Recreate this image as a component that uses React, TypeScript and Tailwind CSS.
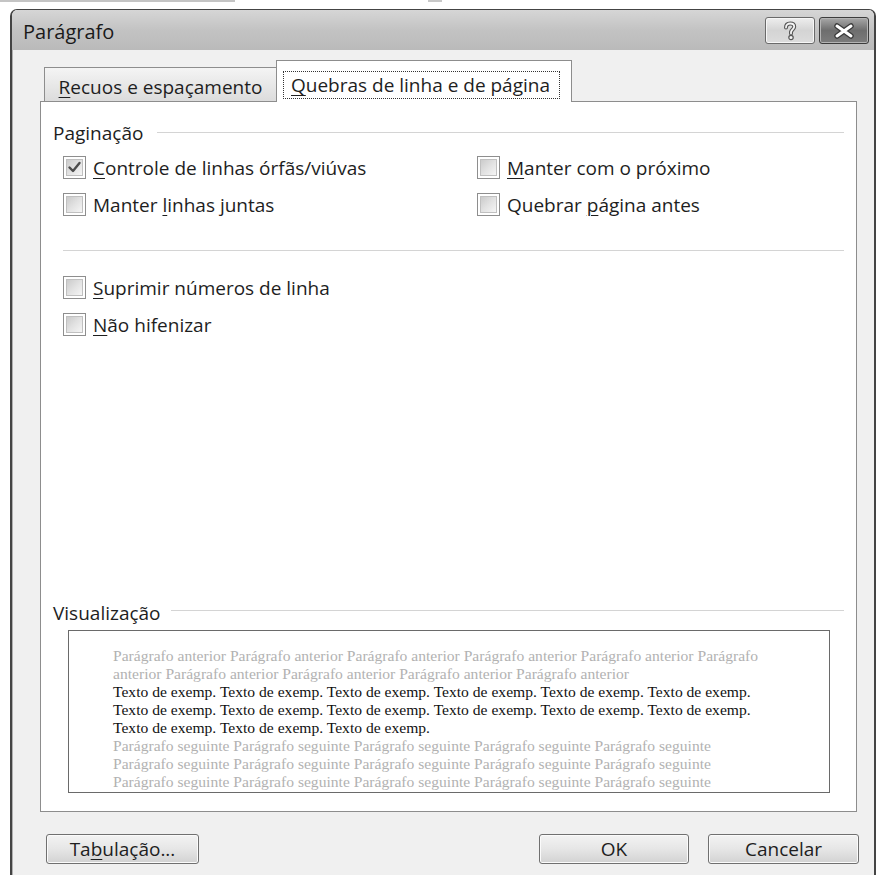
import React from 'react';

// Sublinha a letra de atalho (acelerador) de um rótulo
const Key: React.FC<{ children: React.ReactNode }> = ({ children }) => (
  <span className="underline underline-offset-[3px] decoration-[1px]">{children}</span>
);

const CheckMark = () => (
  <svg width="15" height="15" viewBox="0 0 15 15">
    <path d="M2.5 7.5 L6 11 L12.5 3" fill="none" stroke="#4d4d4d" strokeWidth="2.4" strokeLinecap="round" strokeLinejoin="round" />
  </svg>
);

const Check: React.FC<{ label: React.ReactNode; checked?: boolean }> = ({ label, checked }) => (
  <div className="flex items-center h-[37px] gap-[7px]">
    <span className="w-[23px] h-[23px] border border-[#8e8e8e] bg-white p-[2px] shrink-0">
      <span className="flex items-center justify-center w-full h-full border border-[#c0c0c0] bg-gradient-to-br from-[#cbcbcb] via-[#e2e2e2] to-[#f5f5f5]">
        {checked && <CheckMark />}
      </span>
    </span>
    <span className="text-[19px] leading-[26px] text-[#1e1e1e] whitespace-nowrap">{label}</span>
  </div>
);

const GroupHeader: React.FC<{ label: string; lineClass: string }> = ({ label, lineClass }) => (
  <div className="flex items-center h-[26px]">
    <span className="text-[19px] leading-[26px] text-[#1e1e1e]">{label}</span>
    <span className={`flex-1 h-px bg-[#d4d4d4] ${lineClass}`} />
  </div>
);

const DialogButton: React.FC<{ children: React.ReactNode; className?: string }> = ({ children, className }) => (
  <button
    className={`h-[30px] rounded-[3px] border border-[#707070] bg-gradient-to-b from-[#f3f3f3] via-[#e6e6e6] to-[#d2d2d2] shadow-[inset_0_0_0_1px_#fbfbfb] text-[19px] leading-[26px] text-[#1e1e1e] ${className ?? ''}`}
  >
    {children}
  </button>
);

const HelpIcon = () => (
  <svg width="16" height="20" viewBox="0 0 16 20">
    <path d="M4 6.5 C4 3.5 6 2.5 8.2 2.5 C10.8 2.5 12.2 4 12.2 5.8 C12.2 8 9.5 8.6 9 11 L9 12.5" fill="none" stroke="#555" strokeWidth="4" strokeLinecap="round" />
    <path d="M4 6.5 C4 3.5 6 2.5 8.2 2.5 C10.8 2.5 12.2 4 12.2 5.8 C12.2 8 9.5 8.6 9 11 L9 12.5" fill="none" stroke="#f4f4f4" strokeWidth="1.8" strokeLinecap="round" />
    <circle cx="9" cy="16.5" r="2.2" fill="#f4f4f4" stroke="#555" strokeWidth="1.2" />
  </svg>
);

const CloseIcon = () => (
  <svg width="22" height="16" viewBox="0 0 22 16">
    <path d="M4 3 L18 13 M18 3 L4 13" stroke="#3a3a3a" strokeWidth="5.5" strokeLinecap="round" />
    <path d="M4 3 L18 13 M18 3 L4 13" stroke="#ffffff" strokeWidth="3" strokeLinecap="round" />
  </svg>
);

const anteriorLines = [
  'Parágrafo anterior Parágrafo anterior Parágrafo anterior Parágrafo anterior Parágrafo anterior Parágrafo',
  'anterior Parágrafo anterior Parágrafo anterior Parágrafo anterior Parágrafo anterior',
];
const sampleLines = [
  'Texto de exemp. Texto de exemp. Texto de exemp. Texto de exemp. Texto de exemp. Texto de exemp.',
  'Texto de exemp. Texto de exemp. Texto de exemp. Texto de exemp. Texto de exemp. Texto de exemp.',
  'Texto de exemp. Texto de exemp. Texto de exemp.',
];
const seguinteLines = [
  'Parágrafo seguinte Parágrafo seguinte Parágrafo seguinte Parágrafo seguinte Parágrafo seguinte',
  'Parágrafo seguinte Parágrafo seguinte Parágrafo seguinte Parágrafo seguinte Parágrafo seguinte',
  'Parágrafo seguinte Parágrafo seguinte Parágrafo seguinte Parágrafo seguinte Parágrafo seguinte',
];

export default function App() {
  return (
    <div className="w-[878px] h-[875px] bg-white overflow-hidden font-['Open_Sans','Noto_Sans',sans-serif]">
      {/* resto da janela de trás, cortado no topo */}
      <div className="h-[9px] flex items-start">
        <span className="w-[235px] h-[2px] bg-[#c4c4c4]" />
        <span className="w-[14px] h-[2px] bg-[#c8c8c8] ml-[193px]" />
      </div>

      <div className="ml-[10px] w-[866px] h-[866px] border-l-2 border-r-2 border-t border-[#444] rounded-t-[7px] overflow-hidden flex flex-col">
        {/* barra de título */}
        <div className="h-[40px] shrink-0 flex items-start bg-gradient-to-b from-[#d6d6d6] via-[#c3c3c3] to-[#bababa] pl-[11px] pr-[5px]">
          <span className="mt-[9px] text-[20px] leading-[26px] text-[#1a1a1a]">Parágrafo</span>
          <div className="ml-auto mt-[7px] flex gap-[4px]">
            <div className="w-[50px] h-[27px] rounded-[3px] border border-[#6a6a6a] bg-gradient-to-b from-[#eeeeee] via-[#d4d4d4] to-[#dcdcdc] shadow-[inset_0_0_0_1px_#f6f6f6] flex items-center justify-center">
              <HelpIcon />
            </div>
            <div className="w-[50px] h-[27px] rounded-[3px] border border-[#3c3c3c] bg-gradient-to-b from-[#a8a8a8] via-[#6e6e6e] to-[#7c7c7c] shadow-[inset_0_0_0_1px_#b4b4b4] flex items-center justify-center">
              <CloseIcon />
            </div>
          </div>
        </div>

        {/* área do cliente */}
        <div className="flex-1 bg-[#f0f0f0] border-l border-[#b0b0b0] pl-[27px] pt-[10px]">
          {/* abas */}
          <div className="flex items-end h-[42px] -mb-px">
            <div className="ml-[4px] mb-px w-[233px] h-[34px] border border-b-0 border-[#8d8d8d] bg-gradient-to-b from-[#f4f4f4] to-[#dcdcdc] flex items-center justify-center pt-[4px] text-[19px] leading-[26px] text-[#1e1e1e]">
              <span><Key>R</Key>ecuos e espaçamento</span>
            </div>
            <div className="-ml-px relative z-10 w-[296px] h-[42px] border border-b-0 border-[#8d8d8d] bg-white pl-[6px] pt-[10px]">
              <div className="w-[277px] h-[28px] border border-dotted border-[#333] flex items-center pl-[7px] text-[19px] leading-[26px] text-[#1e1e1e]">
                <span><Key>Q</Key>uebras de linha e de página</span>
              </div>
            </div>
          </div>

          {/* painel da aba */}
          <div className="w-[817px] h-[711px] border border-[#8d8d8d] bg-white px-[12px] pt-[18px] pb-[18px] flex flex-col">
            <GroupHeader label="Paginação" lineClass="ml-[14px] mb-[2px]" />
            <div className="mt-[3px] pl-[10px] grid grid-cols-[414px_1fr]">
              <Check checked label={<><Key>C</Key>ontrole de linhas órfãs/viúvas</>} />
              <Check label={<><Key>M</Key>anter com o próximo</>} />
              <Check label={<>Manter <Key>l</Key>inhas juntas</>} />
              <Check label={<>Quebrar <Key>p</Key>ágina antes</>} />
            </div>
            <div className="mt-[27px] ml-[10px] h-px bg-[#d4d4d4]" />
            <div className="mt-[18px] pl-[10px] flex flex-col">
              <Check label={<><Key>S</Key>uprimir números de linha</>} />
              <Check label={<><Key>N</Key>ão hifenizar</>} />
            </div>

            <div className="mt-auto">
              <GroupHeader label="Visualização" lineClass="ml-[10px] mb-[6px]" />
              <div className="mt-[4px] ml-[15px] mr-[14px] h-[163px] border border-[#6a6a6a] bg-white overflow-hidden pl-[44px] pt-[16px] font-['Liberation_Serif','Times_New_Roman',serif] text-[15.6px] leading-[18px] whitespace-nowrap">
                {anteriorLines.map((line, i) => (
                  <div key={`a${i}`} className="text-[#b2b2b2]">{line}</div>
                ))}
                {sampleLines.map((line, i) => (
                  <div key={`t${i}`} className="text-[#111]">{line}</div>
                ))}
                {seguinteLines.map((line, i) => (
                  <div key={`s${i}`} className="text-[#b2b2b2]">{line}</div>
                ))}
              </div>
            </div>
          </div>

          {/* botões do rodapé */}
          <div className="mt-[22px] w-[819px] flex">
            <DialogButton className="ml-[6px] w-[153px]">
              Ta<Key>b</Key>ulação...
            </DialogButton>
            <DialogButton className="ml-auto w-[150px]">OK</DialogButton>
            <DialogButton className="ml-[19px] w-[151px]">Cancelar</DialogButton>
          </div>
        </div>
      </div>
    </div>
  );
}
